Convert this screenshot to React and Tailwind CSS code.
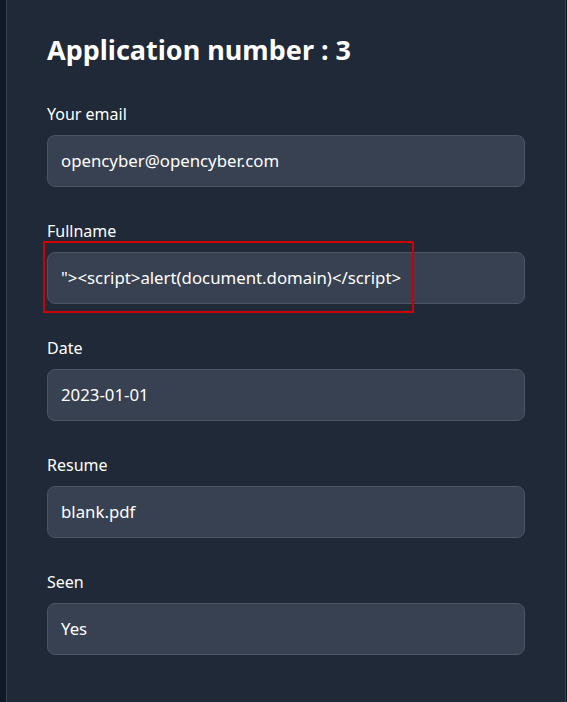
import React from 'react';

const fields = [
  { label: 'Your email', value: 'opencyber@opencyber.com' },
  { label: 'Fullname', value: '"><script>alert(document.domain)</script>', flagged: true },
  { label: 'Date', value: '2023-01-01' },
  { label: 'Resume', value: 'blank.pdf' },
  { label: 'Seen', value: 'Yes' },
];

const Field = ({ label, value, flagged }) => (
  <div className="mb-8">
    <label className="block mb-[9px] text-base leading-6 text-white">{label}</label>
    <div className="relative">
      <div className="h-[52px] w-full flex items-center px-[13px] bg-[#374151] border border-[#4b5563] rounded-lg text-[16.8px] text-white">
        {value}
      </div>
      {flagged && (
        <div className="absolute left-[-4px] top-[-11px] w-[371px] h-[72px] border-2 border-[#d00000] pointer-events-none" />
      )}
    </div>
  </div>
);

export default function App() {
  return (
    <div className="min-h-[702px] bg-[#111827] pl-[6px] pr-[1px]" style={{ fontFamily: '"Noto Sans", sans-serif' }}>
      <div className="min-h-[702px] bg-[#1f2937] border-x border-[#374151] px-10 pt-8 pb-4">
        <h1 className="text-[27px] leading-9 font-bold text-white mb-[34px]">Application number : 3</h1>
        {fields.map(f => (
          <Field key={f.label} {...f} />
        ))}
      </div>
    </div>
  );
}
